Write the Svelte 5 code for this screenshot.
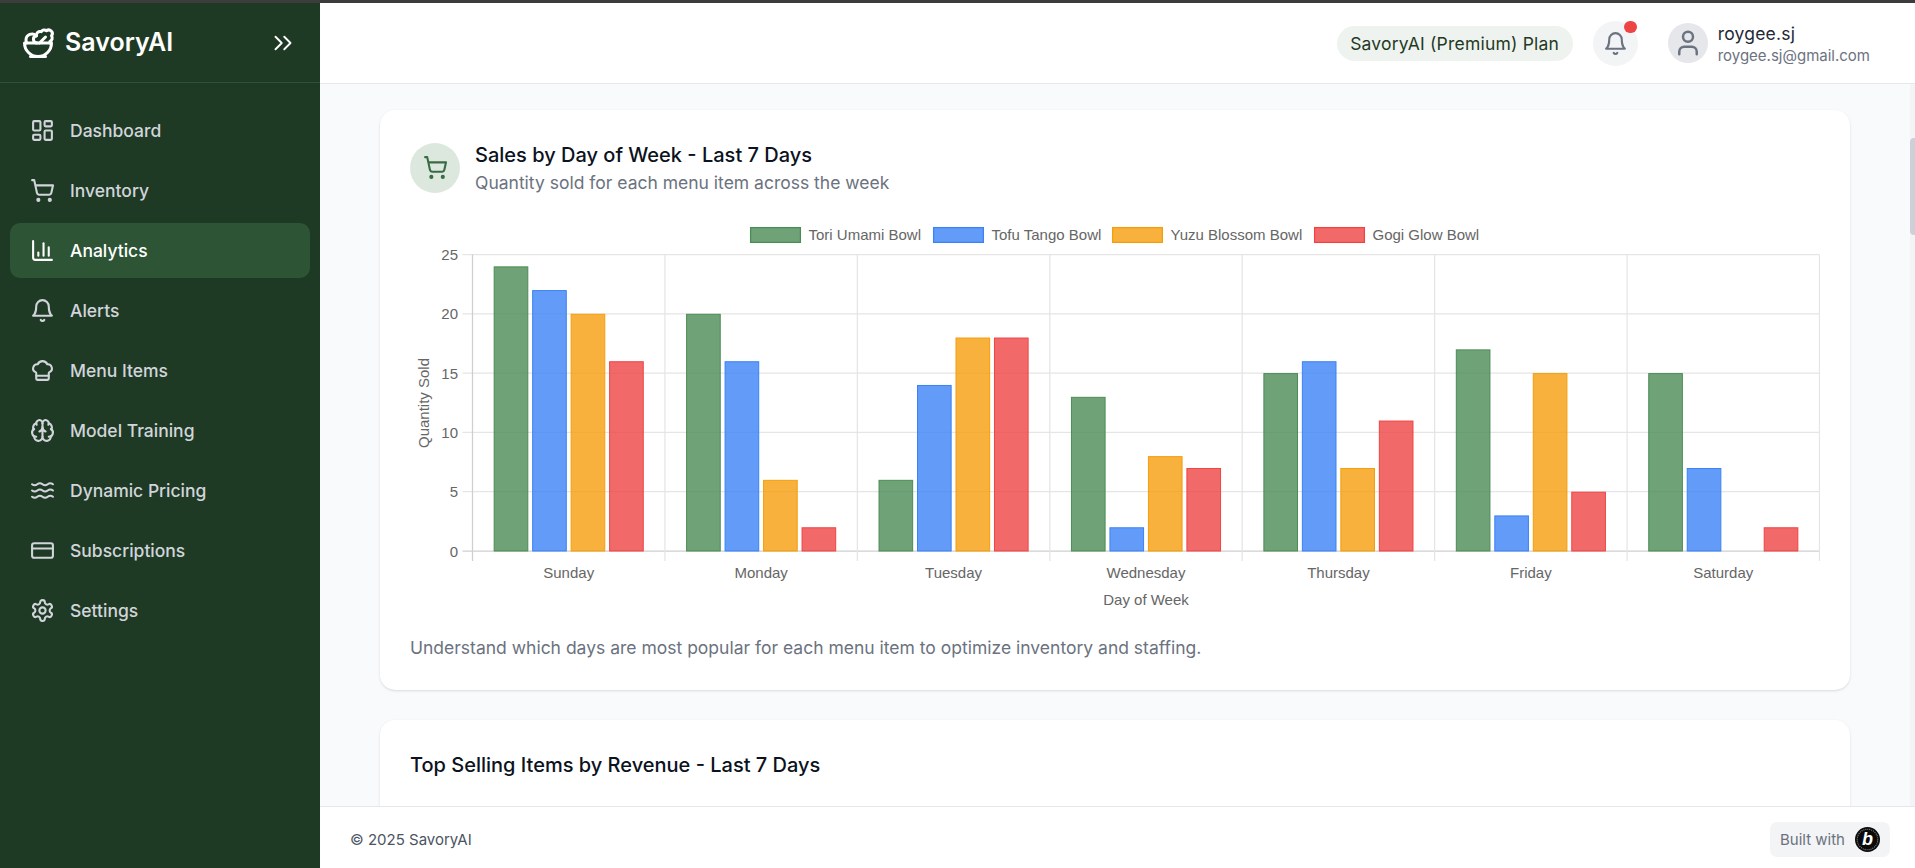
<script>
  const circle = (cx, cy, r) => `M${cx - r} ${cy}a${r} ${r} 0 1 0 ${2 * r} 0a${r} ${r} 0 1 0 ${-2 * r} 0`;
  const rect = (x, y, w, h, r) =>
    `M${x + r} ${y}h${w - 2 * r}a${r} ${r} 0 0 1 ${r} ${r}v${h - 2 * r}a${r} ${r} 0 0 1 ${-r} ${r}h${-(w - 2 * r)}a${r} ${r} 0 0 1 ${-r} ${-r}v${-(h - 2 * r)}a${r} ${r} 0 0 1 ${r} ${-r}z`;
  const wave = (y) => `M2 ${y}c.6.5 1.2 1 2.5 1C7 ${y + 1} 7 ${y - 1} 9.5 ${y - 1}c2.6 0 2.4 2 5 2 2.5 0 2.5-2 5-2 1.3 0 1.9.5 2.5 1`;

  const cart = [circle(8, 21, 1), circle(19, 21, 1), 'M2.05 2.05h2l2.66 12.42a2 2 0 0 0 2 1.58h9.78a2 2 0 0 0 1.95-1.57l1.65-7.43H5.12'];
  const bell = ['M6 8a6 6 0 0 1 12 0c0 7 3 9 3 9H3s3-2 3-9', 'M10.3 21a1.94 1.94 0 0 0 3.4 0'];
  const user = ['M19 21v-2a4 4 0 0 0-4-4H9a4 4 0 0 0-4 4v2', circle(12, 7, 4)];
  const salad = ['M7 21h10', 'M12 21a9 9 0 0 0 9-9H3a9 9 0 0 0 9 9Z', 'M11.38 12a2.4 2.4 0 0 1-.4-4.77 2.4 2.4 0 0 1 3.2-2.77 2.4 2.4 0 0 1 3.47-.63 2.4 2.4 0 0 1 3.37 3.37 2.4 2.4 0 0 1-1.1 3.7 2.51 2.51 0 0 1 .03 1.1', 'm13 12 4-4', 'M10.9 7.25A3.99 3.99 0 0 0 4 10c0 .73.2 1.41.54 2'];
  const chevrons = ['m6 17 5-5-5-5', 'm13 17 5-5-5-5'];

  const nav = [
    { label: 'Dashboard', icon: [rect(3, 3, 7, 9, 1), rect(14, 3, 7, 5, 1), rect(14, 12, 7, 9, 1), rect(3, 16, 7, 5, 1)] },
    { label: 'Inventory', icon: cart },
    { label: 'Analytics', active: true, icon: ['M3 3v16a2 2 0 0 0 2 2h16', 'M18 17V9', 'M13 17V5', 'M8 17v-3'] },
    { label: 'Alerts', icon: bell },
    { label: 'Menu Items', icon: ['M17 21a1 1 0 0 0 1-1v-5.35c0-.457.316-.844.727-1.041a4 4 0 0 0-2.134-7.589 5 5 0 0 0-9.186 0 4 4 0 0 0-2.134 7.588c.411.198.727.585.727 1.041V20a1 1 0 0 0 1 1Z', 'M6 17h12'] },
    { label: 'Model Training', icon: ['M12 18V5', 'M15 13a4.17 4.17 0 0 1-3-4 4.17 4.17 0 0 1-3 4', 'M17.598 6.5A3 3 0 1 0 12 5a3 3 0 1 0-5.598 1.5', 'M17.997 5.125a4 4 0 0 1 2.526 5.77', 'M18 18a4 4 0 0 0 2-7.464', 'M19.967 17.483A4 4 0 1 1 12 18a4 4 0 1 1-7.967-.517', 'M6 18a4 4 0 0 1-2-7.464', 'M6.003 5.125a4 4 0 0 0-2.526 5.77'] },
    { label: 'Dynamic Pricing', icon: [wave(6), wave(12), wave(18)] },
    { label: 'Subscriptions', icon: [rect(2, 5, 20, 14, 2), 'M2 10h20'] },
    { label: 'Settings', icon: ['M12.22 2h-.44a2 2 0 0 0-2 2v.18a2 2 0 0 1-1 1.73l-.43.25a2 2 0 0 1-2 0l-.15-.08a2 2 0 0 0-2.73.73l-.22.38a2 2 0 0 0 .73 2.73l.15.1a2 2 0 0 1 1 1.72v.51a2 2 0 0 1-1 1.74l-.15.09a2 2 0 0 0-.73 2.73l.22.38a2 2 0 0 0 2.73.73l.15-.08a2 2 0 0 1 2 0l.43.25a2 2 0 0 1 1 1.73V20a2 2 0 0 0 2 2h.44a2 2 0 0 0 2-2v-.18a2 2 0 0 1 1-1.73l.43-.25a2 2 0 0 1 2 0l.15.08a2 2 0 0 0 2.73-.73l.22-.39a2 2 0 0 0-.73-2.73l-.15-.08a2 2 0 0 1-1-1.74v-.5a2 2 0 0 1 1-1.74l.15-.09a2 2 0 0 0 .73-2.73l-.22-.38a2 2 0 0 0-2.73-.73l-.15.08a2 2 0 0 1-2 0l-.43-.25a2 2 0 0 1-1-1.73V4a2 2 0 0 0-2-2z', circle(12, 12, 3)] }
  ];

  const days = ['Sunday', 'Monday', 'Tuesday', 'Wednesday', 'Thursday', 'Friday', 'Saturday'];
  const series = [
    { name: 'Tori Umami Bowl', fill: 'rgba(75,140,85,.8)', line: '#4b8c55', lx: 340, data: [24, 20, 6, 13, 15, 17, 15] },
    { name: 'Tofu Tango Bowl', fill: 'rgba(59,130,246,.8)', line: '#3b82f6', lx: 523, data: [22, 16, 14, 2, 16, 3, 7] },
    { name: 'Yuzu Blossom Bowl', fill: 'rgba(245,158,11,.8)', line: '#f59e0b', lx: 702, data: [20, 6, 18, 8, 7, 15, 0] },
    { name: 'Gogi Glow Bowl', fill: 'rgba(239,68,68,.8)', line: '#ef4444', lx: 904, data: [16, 2, 18, 7, 11, 5, 2] }
  ];

  const left = 62.5, right = 1409.5, y0 = 328, yTop = 31.5;
  const cat = (right - left) / 7;
  const unit = (y0 - yTop) / 25;
  const slot = cat * 0.8 / 4;
  const barW = slot * 0.9;
  const ticks = [0, 5, 10, 15, 20, 25];
  const bars = series.flatMap((s, si) =>
    s.data.map((v, di) => ({
      v,
      fill: s.fill,
      line: s.line,
      x: left + cat * di + cat * 0.1 + slot * si + (slot - barW) / 2,
      y: y0 - v * unit,
      h: v * unit
    })).filter((b) => b.v > 0)
  );
</script>

{#snippet icon(paths, size, cls)}
  <svg class={cls} width={size} height={size} viewBox="0 0 24 24" fill="none" stroke="currentColor" stroke-width="2" stroke-linecap="round" stroke-linejoin="round">
    {#each paths as d}<path {d} />{/each}
  </svg>
{/snippet}

<div class="app">
  <div class="strip"></div>
  <div class="shell">
    <aside class="sidebar">
      <div class="brand">
        <div class="logo">
          {@render icon(salad, 36, 'logo-icon')}
          <span class="logo-text">SavoryAI</span>
        </div>
        {@render icon(chevrons, 30, 'chev')}
      </div>
      <nav class="nav">
        {#each nav as item}
          <div class="nav-item" class:active={item.active}>
            {@render icon(item.icon, 25, 'nav-icon')}
            <span>{item.label}</span>
          </div>
        {/each}
      </nav>
    </aside>

    <div class="column">
      <header class="topbar">
        <div class="plan">SavoryAI (Premium) Plan</div>
        <div class="bell">
          {@render icon(bell, 25, 'bell-icon')}
          <span class="dot"></span>
        </div>
        <div class="profile">
          <div class="avatar">{@render icon(user, 30, 'user-icon')}</div>
          <div class="who">
            <div class="name">roygee.sj</div>
            <div class="email">roygee.sj@gmail.com</div>
          </div>
        </div>
      </header>

      <main class="main">
        <section class="card">
          <div class="card-head">
            <div class="round">{@render icon(cart, 25, 'round-icon')}</div>
            <div>
              <h2 class="title">Sales by Day of Week - Last 7 Days</h2>
              <p class="sub">Quantity sold for each menu item across the week</p>
            </div>
          </div>

          <svg class="chart" width="1410" height="388" viewBox="0 0 1410 388">
            {#each series as s}
              <rect x={s.lx + .6} y="4.6" width="49.8" height="14.8" fill={s.fill} stroke={s.line} stroke-width="1.25" />
              <text x={s.lx + 58.5} y="16.5" class="lbl">{s.name}</text>
            {/each}

            {#each ticks as t}
              <line x1={left - 10} x2={right} y1={y0 - t * unit} y2={y0 - t * unit} class={t === 0 ? 'axis' : 'grid'} />
              <text x="48" y={y0 - t * unit + 5.5} text-anchor="end" class="lbl">{t}</text>
            {/each}
            {#each Array(8) as _, i}
              <line x1={left + cat * i} x2={left + cat * i} y1={yTop} y2={y0 + 10} class={i === 0 ? 'axis' : 'grid'} />
            {/each}

            {#each bars as b}
              <rect x={b.x + .5} y={b.y + .5} width={barW - 1} height={b.h - .5} fill={b.fill} stroke={b.line} stroke-width="1" />
            {/each}

            {#each days as d, i}
              <text x={left + cat * (i + .5)} y="355" text-anchor="middle" class="lbl">{d}</text>
            {/each}
            <text x="736" y="382" text-anchor="middle" class="lbl">Day of Week</text>
            <text transform="translate(19 180) rotate(-90)" text-anchor="middle" class="lbl">Quantity Sold</text>
          </svg>

          <p class="note">Understand which days are most popular for each menu item to optimize inventory and staffing.</p>
        </section>

        <section class="card second">
          <h2 class="title">Top Selling Items by Revenue - Last 7 Days</h2>
        </section>

        <div class="scrollbar"><div class="thumb"></div></div>
      </main>

      <footer class="footer">
        <span class="copy">© 2025 SavoryAI</span>
        <div class="built">
          <span>Built with</span>
          <svg class="blogo" width="25" height="25" viewBox="0 0 25 25">
            <circle cx="12.5" cy="12.5" r="12.5" fill="#0a0a0a" />
            <circle cx="12.5" cy="12.5" r="10.3" fill="none" stroke="#8a8a8a" stroke-width="1.1" stroke-dasharray="1 1" />
            <text x="12.5" y="18" text-anchor="middle" class="b">b</text>
          </svg>
        </div>
      </footer>
    </div>
  </div>
</div>

<style>
  :global(body) {
    margin: 0;
    font-family: Inter, "Liberation Sans", sans-serif;
  }
  .app {
    height: 868px;
    width: 1915px;
    display: flex;
    flex-direction: column;
    overflow: hidden;
  }
  .strip {
    height: 3px;
    background: #3c3c3c;
    flex: none;
  }
  .shell {
    flex: 1;
    display: flex;
    min-height: 0;
  }
  .sidebar {
    width: 320px;
    flex: none;
    background: #1f3a24;
    color: #d1d5db;
  }
  .brand {
    height: 79px;
    border-bottom: 1px solid #2d5234;
    display: flex;
    align-items: center;
    justify-content: space-between;
    padding: 0 22px 0 20px;
  }
  .logo {
    display: flex;
    align-items: center;
    gap: 9px;
    color: #fff;
  }
  .logo-text {
    font-size: 25px;
    font-weight: 600;
    line-height: 1;
  }
  .brand :global(.chev) {
    color: #fff;
    stroke-width: 1.5;
  }
  .nav {
    display: flex;
    flex-direction: column;
    gap: 5px;
    padding: 20px 10px;
  }
  .nav-item {
    height: 55px;
    display: flex;
    align-items: center;
    gap: 15px;
    padding: 0 20px;
    border-radius: 10px;
    font-size: 17.5px;
    font-weight: 500;
  }
  .nav-item.active {
    background: #2d5434;
    color: #fff;
  }
  .column {
    flex: 1;
    min-width: 0;
    display: flex;
    flex-direction: column;
  }
  .topbar {
    height: 80px;
    flex: none;
    background: #fff;
    border-bottom: 1px solid #e5e7eb;
    display: flex;
    align-items: center;
    justify-content: flex-end;
    padding: 0 45px 0 0;
  }
  .plan {
    height: 35px;
    width: 236px;
    box-sizing: border-box;
    display: flex;
    align-items: center;
    justify-content: center;
    border-radius: 18px;
    background: #eff3f0;
    color: #1f3a24;
    font-size: 17.5px;
    font-weight: 400;
    letter-spacing: .012em;
    white-space: nowrap;
  }
  .bell {
    position: relative;
    width: 45px;
    height: 45px;
    margin-left: 20px;
    border-radius: 50%;
    background: #f3f4f6;
    color: #6b7280;
    display: flex;
    align-items: center;
    justify-content: center;
  }
  .dot {
    position: absolute;
    top: 0;
    right: 1px;
    width: 12.5px;
    height: 12.5px;
    border-radius: 50%;
    background: #ef4444;
  }
  .profile {
    display: flex;
    align-items: center;
    gap: 10px;
    margin-left: 30px;
  }
  .avatar {
    width: 40px;
    height: 40px;
    border-radius: 50%;
    background: #e5e7eb;
    color: #6b7280;
    display: flex;
    align-items: center;
    justify-content: center;
  }
  .name {
    font-size: 17.5px;
    font-weight: 400;
    letter-spacing: .012em;
    color: #1f2937;
    line-height: 25px;
  }
  .email {
    font-size: 15px;
    color: #6b7280;
    line-height: 20px;
  }
  .main {
    position: relative;
    flex: 1;
    min-height: 0;
    overflow: hidden;
    background: #f9fafb;
    padding: 26px 65px 0 60px;
    display: flex;
    flex-direction: column;
    gap: 30px;
  }
  .card {
    flex: none;
    background: #fff;
    border-radius: 15px;
    box-shadow: 0 1px 3px rgba(0, 0, 0, .1), 0 1px 2px -1px rgba(0, 0, 0, .1);
    padding: 30px;
  }
  .card-head {
    display: flex;
    align-items: center;
    gap: 15px;
    margin-bottom: 28px;
  }
  .round {
    width: 50px;
    height: 50px;
    border-radius: 50%;
    background: #dce8de;
    color: #3a6b43;
    display: flex;
    align-items: center;
    justify-content: center;
    flex: none;
  }
  .title {
    margin: 0;
    font-size: 20px;
    line-height: 30px;
    font-weight: 450;
    color: #0b1220;
  }
  .sub {
    margin: 0;
    font-size: 17.5px;
    line-height: 25px;
    color: #6b7280;
  }
  .chart {
    display: block;
  }
  .lbl {
    font-family: "Liberation Sans", sans-serif;
    font-size: 15px;
    fill: #666;
  }
  .grid {
    stroke: #e5e5e5;
    stroke-width: 1.25;
  }
  .axis {
    stroke: #cfcfcf;
    stroke-width: 1.25;
  }
  .note {
    margin: 24px 0 0;
    font-size: 17.5px;
    line-height: 25px;
    color: #6b7280;
  }
  .second {
    min-height: 300px;
  }
  .scrollbar {
    position: absolute;
    top: 0;
    right: 0;
    bottom: 0;
    width: 5px;
    background: #f3f4f6;
  }
  .thumb {
    position: absolute;
    top: 54px;
    left: 0;
    right: 0;
    height: 97px;
    background: #cdd0d8;
    border-radius: 4px 0 0 4px;
  }
  .footer {
    height: 62px;
    box-sizing: border-box;
    padding: 3px 25px 0 30px;
    flex: none;
    background: #fff;
    border-top: 1px solid #e5e7eb;
    display: flex;
    align-items: center;
    justify-content: space-between;
  }
  .copy {
    font-size: 15px;
    color: #4b5563;
  }
  .built {
    height: 35px;
    width: 120px;
    box-sizing: border-box;
    background: #f3f4f6;
    border-radius: 7px;
    display: flex;
    align-items: center;
    gap: 10px;
    padding: 0 10px;
    font-size: 15px;
    color: #6b7280;
    white-space: nowrap;
  }
  .b {
    font-family: "Liberation Sans", sans-serif;
    font-size: 18px;
    font-weight: 700;
    font-style: italic;
    fill: #fff;
  }
</style>
